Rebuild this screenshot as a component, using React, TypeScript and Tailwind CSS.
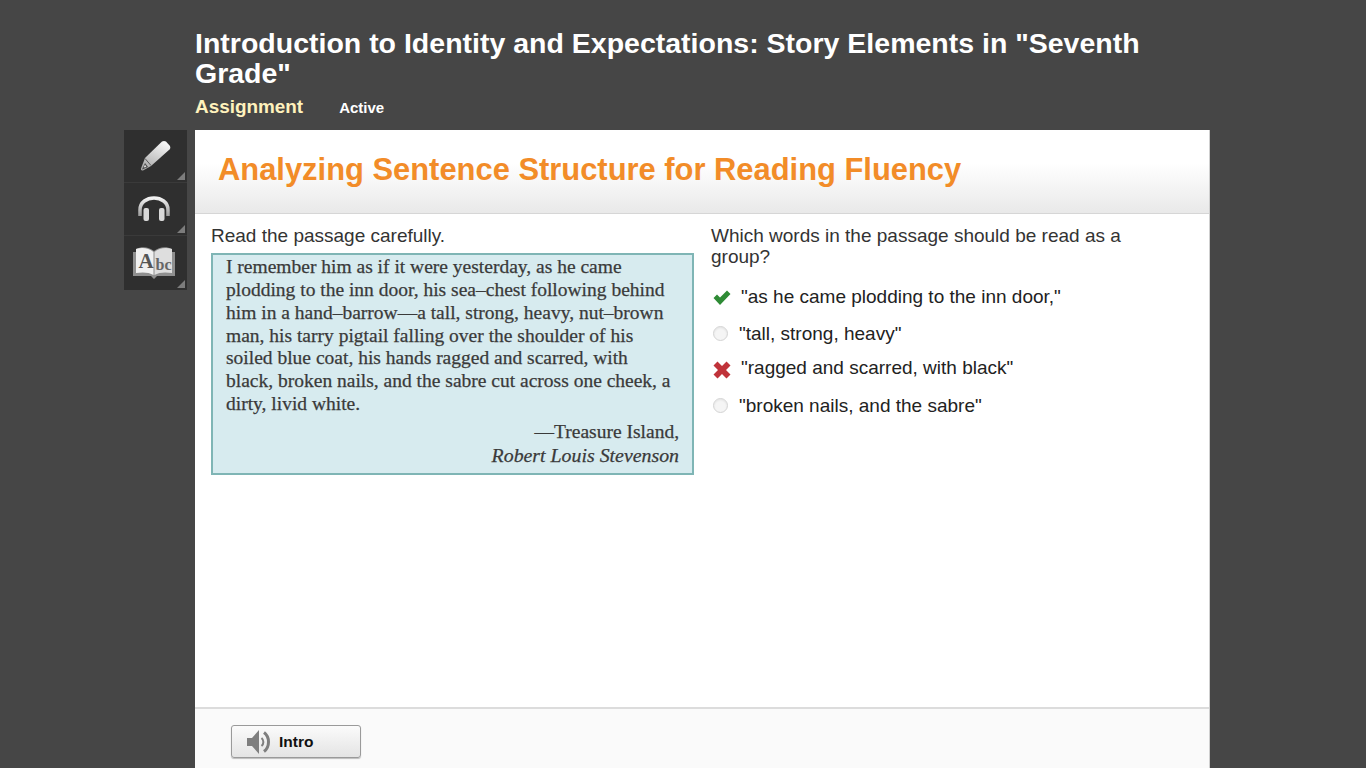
import React from "react";

const Tool = ({ children, h }: { children: React.ReactNode; h: string }) => (
  <div className={`relative w-[63px] ${h} bg-[#2f2f2f] flex items-center justify-center`}>
    {children}
    <div className="absolute right-[2px] bottom-[2px] w-0 h-0 border-l-[8px] border-l-transparent border-b-[8px] border-b-[#7c7c7c]" />
  </div>
);

const Radio = () => (
  <span className="w-[15px] h-[15px] rounded-full border border-[#d4d4d4] bg-[#f5f5f5] shrink-0 shadow-[inset_0_1px_2px_rgba(0,0,0,0.08)]" />
);

export default function App() {
  return (
    <div className="h-screen overflow-hidden bg-[#464646] font-['Liberation_Sans',sans-serif]">
      <div className="ml-[195px] w-[1015px] pt-[28px] h-[130px]">
        <h1 className="text-[28.5px] leading-[30px] font-bold text-white w-[970px]">
          Introduction to Identity and Expectations: Story Elements in "Seventh Grade"
        </h1>
        <div className="flex items-baseline mt-[5px]">
          <span className="text-[18.9px] leading-[28px] font-bold text-[#fff2bd]">Assignment</span>
          <span className="ml-[36px] text-[15px] font-bold text-white">Active</span>
        </div>
      </div>
      <div className="flex">
        <div className="ml-[124px] w-[63px] flex flex-col gap-[1px] h-[160px] bg-[#3a3a3a]">
          <Tool h="h-[52px]">
            <svg width="32" height="32" viewBox="0 0 32 32" className="-ml-[1px]">
              <defs>
                <linearGradient id="g1" x1="0.7" y1="0" x2="0.2" y2="1">
                  <stop offset="0" stopColor="#f6f6f6" />
                  <stop offset="1" stopColor="#a8a8a8" />
                </linearGradient>
              </defs>
              <path d="M23 1.5 Q25 0.5 27 1.5 L31 6 Q32 8 30.5 9.5 L12 26 L4 30.5 Q1.5 31 2 28.5 L6 18 Z" fill="url(#g1)" />
              <path d="M6 18.5 L12 25.5" stroke="#5a5a5a" strokeWidth="1" fill="none" />
              <path d="M3 29.5 L6 23 L9 27 Z" fill="#444" />
              <path d="M4.5 27.5 L6 24.5 L7.5 27 Z" fill="#ddd" />
            </svg>
          </Tool>
          <Tool h="h-[52px]">
            <svg width="34" height="28" viewBox="0 0 34 28" className="-ml-[3px]">
              <defs>
                <linearGradient id="g2" x1="0" y1="0" x2="0" y2="1">
                  <stop offset="0" stopColor="#f2f2f2" />
                  <stop offset="1" stopColor="#9c9c9c" />
                </linearGradient>
              </defs>
              <path d="M3 21 V15 C3 -1 31 -1 31 15 V21" fill="none" stroke="url(#g2)" strokeWidth="3.5" />
              <rect x="6.5" y="13" width="5.5" height="13" rx="2" fill="#d9d9d9" />
              <rect x="22" y="13" width="5.5" height="13" rx="2" fill="#d9d9d9" />
            </svg>
          </Tool>
          <Tool h="h-[54px]">
            <svg width="42" height="34" viewBox="0 0 42 34" className="-ml-[3px]">
              <path d="M0 6 H3 V3 C9 0 16 1 21 5 C26 1 33 0 39 3 V6 H42 V30 L24 30 L21 33 L18 30 L0 30 Z" fill="#8f8f8f" />
              <path d="M3 3 C9 1 16 2 20.5 6 V29 C16 26 9 26 3 27 Z" fill="#f0f0f0" />
              <path d="M39 3 C33 1 26 2 21.5 6 V29 C26 26 33 26 39 27 Z" fill="#dedede" />
              <text x="5.5" y="22" fontFamily="Liberation Serif" fontSize="21" fontWeight="700" fill="#555">A</text>
              <text x="22.5" y="24" fontFamily="Liberation Serif" fontSize="16" fontWeight="700" fill="#666">bc</text>
            </svg>
          </Tool>
        </div>
        <div className="ml-[8px] w-[1015px] h-[638px] bg-white flex flex-col border-r border-[#cfcfcf]">
          <div className="h-[84px] shrink-0 pl-[23px] pt-[22px] border-b border-[#d6d6d6] bg-gradient-to-b from-white from-40% to-[#e9e9e9]">
            <h2 className="text-[30.9px] leading-[36px] font-bold text-[#f28c28]">
              Analyzing Sentence Structure for Reading Fluency
            </h2>
          </div>
          <div className="flex-1 flex pl-[16px] pt-[11px]">
            <div className="w-[484px] shrink-0">
              <p className="text-[19px] leading-[21px] text-[#333]">Read the passage carefully.</p>
              <div className="mt-[7px] w-[483px] h-[222px] border-2 border-[#7fb5b5] bg-[#d7ebef] pl-[13px] pr-[13px] pt-[1px] font-['Liberation_Serif',serif] text-[19.5px] leading-[22.85px] text-[#3a3a3a] [-webkit-text-stroke:0.25px_#3a3a3a]">
                <p>
                  I remember him as if it were yesterday, as he came<br />
                  plodding to the inn door, his sea–chest following behind<br />
                  him in a hand–barrow—a tall, strong, heavy, nut–brown<br />
                  man, his tarry pigtail falling over the shoulder of his<br />
                  soiled blue coat, his hands ragged and scarred, with<br />
                  black, broken nails, and the sabre cut across one cheek, a<br />
                  dirty, livid white.
                </p>
                <p className="text-right mt-[5px] whitespace-nowrap">—Treasure Island,</p>
                <p className="text-right italic text-[19.85px] whitespace-nowrap">Robert Louis Stevenson</p>
              </div>
            </div>
            <div className="ml-[16px] flex-1 pr-[60px] text-[19px] leading-[21px]">
              <p className="text-[#333]">Which words in the passage should be read as a group?</p>
              <div className="mt-[19px] flex flex-col text-[#222]">
                <div className="flex items-center gap-[10px] ml-[2px] h-[21px]">
                  <svg width="18" height="16" viewBox="0 0 18 16" className="mt-[2px]">
                    <path d="M0.5 8 L4 4.5 L7 7.5 L14 0.5 L17.5 4 L7 15 Z" fill="#2e8b35" />
                  </svg>
                  <span>"as he came plodding to the inn door,"</span>
                </div>
                <div className="flex items-center gap-[11px] mt-[16px] ml-[2px] h-[21px]">
                  <Radio />
                  <span>"tall, strong, heavy"</span>
                </div>
                <div className="flex items-center gap-[10px] mt-[13px] ml-[2px] h-[21px]">
                  <svg width="18" height="18" viewBox="0 0 18 18" className="mt-[4px]">
                    <path d="M4.5 0.5 L9 5 L13.5 0.5 L17.5 4.5 L13 9 L17.5 13.5 L13.5 17.5 L9 13 L4.5 17.5 L0.5 13.5 L5 9 L0.5 4.5 Z" fill="#c0333a" />
                  </svg>
                  <span>"ragged and scarred, with black"</span>
                </div>
                <div className="flex items-center gap-[11px] mt-[17px] ml-[2px] h-[21px]">
                  <Radio />
                  <span>"broken nails, and the sabre"</span>
                </div>
              </div>
            </div>
          </div>
          <div className="h-[61px] shrink-0 border-t-2 border-[#dcdcdc] bg-[#fafafa] pl-[36px] pt-[16px]">
            <button className="w-[130px] h-[33px] rounded-[3px] border border-[#9a9a9a] bg-gradient-to-b from-[#fbfbfb] to-[#e4e4e4] flex items-center pl-[14px] shadow-[0_1px_1px_rgba(0,0,0,0.25)]">
              <svg width="26" height="26" viewBox="0 0 26 26">
                <path d="M1 9 H6 L13 1 V25 L6 17 H1 Z" fill="#7e7e7e" />
                <path d="M15.5 9 C18 11 18 15 15.5 17" fill="none" stroke="#7e7e7e" strokeWidth="2" />
                <path d="M18 3.5 C24 8 24 18 18 22.5" fill="none" stroke="#7e7e7e" strokeWidth="3" />
              </svg>
              <span className="ml-[7px] text-[15.5px] font-bold text-[#111]">Intro</span>
            </button>
          </div>
        </div>
      </div>
    </div>
  );
}
